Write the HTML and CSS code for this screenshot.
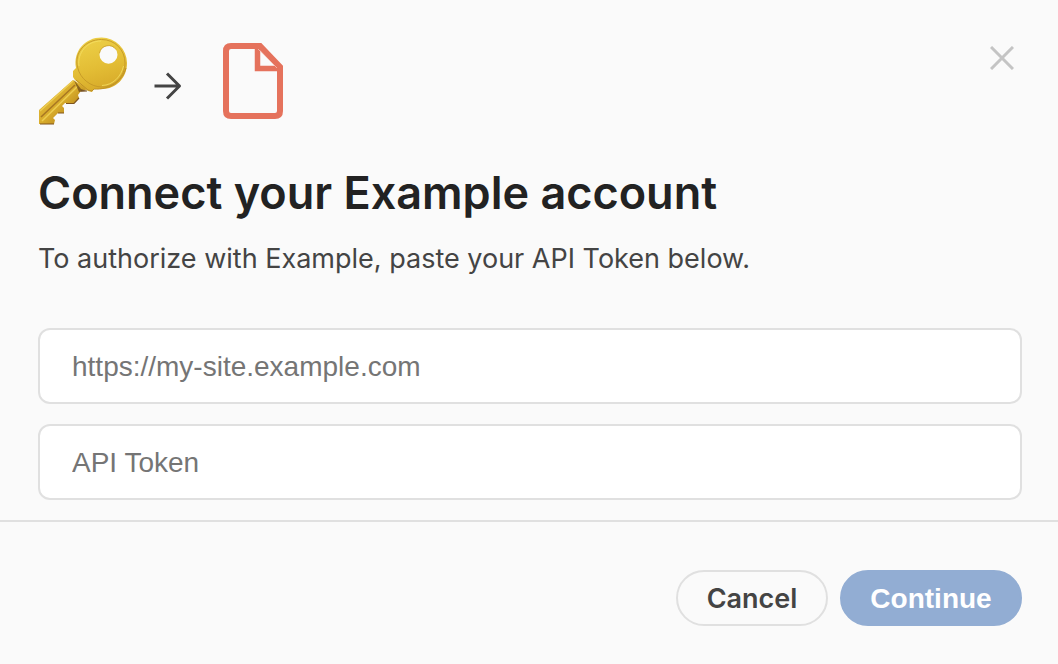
FILE: index.html
```html
<!DOCTYPE html>
<html lang="en">
<head>
<meta charset="utf-8">
<meta name="viewport" content="width=device-width, initial-scale=1">
<title>Connect your Example account</title>
<link rel="stylesheet" href="styles.css">
</head>
<body>
<form class="dialog">
  <div class="dialog-body">
    <header class="top">
      <div class="icons">
        <svg class="key" viewBox="0 0 90 88" aria-hidden="true">
          <defs>
            <linearGradient id="gold" x1="0.3" y1="0" x2="0.6" y2="1">
              <stop offset="0" stop-color="#edd047"/>
              <stop offset="0.55" stop-color="#e3bd35"/>
              <stop offset="1" stop-color="#d6a828"/>
            </linearGradient>
            <linearGradient id="shaft" gradientUnits="userSpaceOnUse" x1="14" y1="58" x2="30" y2="74">
              <stop offset="0" stop-color="#dcb233"/>
              <stop offset="0.5" stop-color="#d9ad2c"/>
              <stop offset="1" stop-color="#c49422"/>
            </linearGradient>
          </defs>
          <path fill="url(#shaft)" d="M35 43 1 73V87H16L17 83 15 81 20 76H26V71L24 69 27 66H36L41 61 40 58 43 54 51 52Z"/>
          <path fill="none" stroke="#a87722" stroke-width="1.600" d="M37 48 3 80"/>
          <path fill="none" stroke="#edcd50" stroke-width="1.500" d="M35 44 2 74M40 49 4 84"/>
          <path fill="none" stroke="#80551d" stroke-width="1.200" d="M43 54 49 54M28 66.500H36L41 61M20 76H26M2 87H16"/>
          <path fill="#5e3b14" opacity=".65" d="M36 43 43 52 49 54 41 55Z"/>
          <path fill="url(#gold)" fill-rule="evenodd" d="M63.500 .5A26 26 0 0 1 89 26C89 41 78 52 64 52C60 52 58 52 56 52L54 55 50 54 37 43 35 40V34L38 31C35 14 47 .5 63.500 .5ZM70.500 8.700a9 9 0 1 0 0 18a9 9 0 1 0 0-18Z"/>
          <path fill="none" stroke="#c49727" stroke-width=".9" d="M39.500 30C36 16 47 2.500 63.500 2.500C77 2.500 87 13 87 26C87 39 77 50 64 50C53 50 42 42 39.500 30Z"/>
          <path fill="none" stroke="#f5df66" stroke-width=".8" d="M41 29C39 16 49 4 63 4M85.500 29C83 40 75 48 64 48.500"/>
          <path fill="none" stroke="#bf9126" stroke-width="1" d="M38 43 50 53 54 54 56 52C71 53 84 45 88 31"/>
          <path fill="none" stroke="#c99e2c" stroke-width=".8" d="M61.500 16A9.200 9.200 0 0 1 78 12.500"/>
        </svg>
        <svg class="arrow" viewBox="0 0 28 28" aria-hidden="true">
          <path fill="none" stroke="#444" stroke-width="3" stroke-linejoin="round" d="M.5 14H26M13 1.500 25.500 14 13 26.500"/>
        </svg>
        <svg class="file" viewBox="0 0 60 76" aria-hidden="true">
          <path fill="none" stroke="#e5725c" stroke-width="6" d="M8 3H37L57 24V68Q57 73 52 73H8Q3 73 3 68V8Q3 3 8 3Z"/>
          <path fill="none" stroke="#e5725c" stroke-width="5.500" d="M34.500 6V25.500H54"/>
          <path fill="none" stroke="#f6c9c0" stroke-width=".7" d="M35 6 54 25"/>
        </svg>
      </div>
      <button class="close" type="button" aria-label="Close">
        <svg viewBox="0 0 24 24" aria-hidden="true"><path stroke="#c4c4c4" stroke-width="3" d="M1 1 23 23M23 1 1 23"/></svg>
      </button>
    </header>
    <h1 class="title">Connect your Example account</h1>
    <p class="lead">To authorize with Example, paste your API Token below.</p>
    <div class="fields">
      <input class="field" type="text" aria-label="Site URL" placeholder="https://my-site.example.com">
      <input class="field" type="text" aria-label="API Token" placeholder="API Token">
    </div>
  </div>
  <footer class="actions">
    <button class="btn cancel" type="button">Cancel</button>
    <button class="btn continue" type="submit">Continue</button>
  </footer>
</form>
</body>
</html>
```
FILE: styles.css
```css
* {
  box-sizing: border-box;
}

body {
  margin: 0;
  background: #fafafa;
  color: #444;
  font-family: Inter, "Liberation Sans", sans-serif;
}

.dialog-body {
  padding: 37px 36px 20px 38px;
  border-bottom: 2px solid #e0e0e0;
}

.top {
  display: flex;
  justify-content: space-between;
  align-items: flex-start;
}

.icons {
  display: flex;
  align-items: center;
}

.icons svg,
.close svg {
  display: block;
}

.key {
  width: 90px;
  height: 88px;
}

.arrow {
  width: 28px;
  height: 28px;
  margin: 10px 41px 0 26px;
}

.file {
  width: 60px;
  height: 76px;
}

.close {
  padding: 9px 8px;
  border: 0;
  background: none;
  cursor: pointer;
}

.close svg {
  width: 24px;
  height: 24px;
}

.title {
  margin: 40px 0 0;
  color: #222;
  font-size: 45px;
  font-weight: 600;
  line-height: 56px;
}

.lead {
  margin: 20px 0 0;
  font-size: 27px;
  line-height: 36px;
}

.fields {
  display: grid;
  gap: 20px;
  margin-top: 51px;
}

.field {
  width: 100%;
  height: 76px;
  padding: 2px 32px 0;
  border: 2px solid #e0e0e0;
  border-radius: 12px;
  background: #fff;
  color: #444;
  font-family: "Liberation Sans", Arial, sans-serif;
  font-size: 28px;
}

.field::placeholder {
  color: #757575;
}

.actions {
  display: flex;
  justify-content: flex-end;
  gap: 12px;
  padding: 48px 36px 38px;
}

.btn {
  height: 56px;
  padding: 0 28px;
  border: 2px solid #e0e0e0;
  border-radius: 28px;
  background: #fafafa;
  color: #444;
  font-family: inherit;
  font-size: 27px;
  font-weight: 600;
  cursor: pointer;
}

.cancel {
  min-width: 152px;
}

.continue {
  min-width: 182px;
  padding-top: 2px;
  border-color: #92add3;
  background: #92add3;
  color: #fff;
  font-family: "Liberation Sans", Arial, sans-serif;
  font-size: 28px;
}
```
